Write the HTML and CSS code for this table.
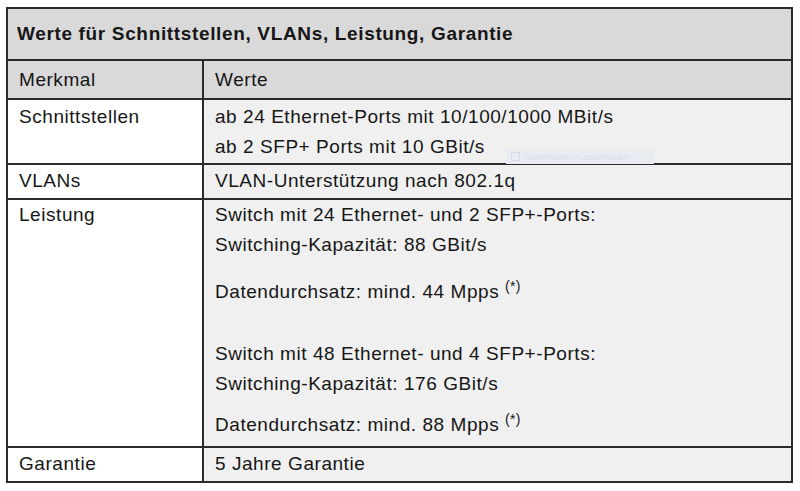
FILE: index.html
```html
<!DOCTYPE html>
<html lang="de">
<head>
<meta charset="utf-8">
<title>Werte für Schnittstellen, VLANs, Leistung, Garantie</title>
<link rel="stylesheet" href="styles.css">
</head>
<body>
<div class="page">
  <table class="spec">
    <colgroup><col class="c1"><col class="c2"></colgroup>
    <tr class="title"><th colspan="2">Werte für Schnittstellen, VLANs, Leistung, Garantie</th></tr>
    <tr class="head"><td>Merkmal</td><td>Werte</td></tr>
    <tr class="row r-if">
      <td>Schnittstellen</td>
      <td class="val has-mark">ab 24 Ethernet-Ports mit 10/100/1000 MBit/s<br>ab 2 SFP+ Ports mit 10 GBit/s
        <span class="mark"><span class="mark-ico"></span><span class="mark-txt">Seitenlegen-Ausschneiden</span></span>
      </td>
    </tr>
    <tr class="row r-vlan"><td>VLANs</td><td class="val">VLAN-Unterstützung nach 802.1q</td></tr>
    <tr class="row r-perf">
      <td>Leistung</td>
      <td class="val">
        <p class="p1">Switch mit 24 Ethernet- und 2 SFP+-Ports:<br>Switching-Kapazität: 88 GBit/s</p>
        <p class="p2">Datendurchsatz: mind. 44 Mpps <sup>(*)</sup></p>
        <p class="p3">Switch mit 48 Ethernet- und 4 SFP+-Ports:<br>Switching-Kapazität: 176 GBit/s</p>
        <p class="p4">Datendurchsatz: mind. 88 Mpps <sup>(*)</sup></p>
      </td>
    </tr>
    <tr class="row r-gar"><td>Garantie</td><td class="val">5 Jahre Garantie</td></tr>
  </table>
</div>
</body>
</html>
```
FILE: styles.css
```css
html, body {
  margin: 0;
  padding: 0;
  background: #ffffff;
}
.page {
  padding: 7px 0 0 6px;
  font-family: "Liberation Sans", Arial, sans-serif;
  color: #161616;
}
.spec {
  border-collapse: collapse;
  width: 787px;
  border: 2px solid #2b2b2b;
  font-size: 19px;
  line-height: 30px;
  letter-spacing: 0.55px;
}
.c1 { width: 196px; }
.spec th, .spec td {
  border: 2px solid #2b2b2b;
  text-align: left;
  vertical-align: top;
}
.title th {
  background: #d9d9d9;
  font-weight: bold;
  letter-spacing: 0.65px;
  height: 52px;
  padding: 0 9px;
  vertical-align: middle;
  box-sizing: border-box;
}
.head td {
  background: #d9d9d9;
  height: 39px;
  padding: 0 11px;
  vertical-align: middle;
  box-sizing: border-box;
}
.row td {
  background: #ffffff;
  padding: 2px 11px 1px;
}
.row td.val {
  background: #f0f0f0;
}
.has-mark { position: relative; }
.mark {
  position: absolute;
  left: 302px;
  top: 49px;
  width: 148px;
  height: 15px;
  background: #e9edf1;
  display: flex;
  align-items: center;
  gap: 4px;
  padding-left: 5px;
  box-sizing: border-box;
  letter-spacing: 0;
}
.mark-ico {
  width: 7px;
  height: 7px;
  border: 1px solid #d6dde5;
}
.mark-txt {
  font-size: 9px;
  line-height: 10px;
  color: #d8dfe7;
}
.r-vlan td { padding-top: 1px; padding-bottom: 2px; }
.r-perf td { padding-top: 0; padding-bottom: 6px; }
.r-gar td { padding-top: 1px; padding-bottom: 2px; }
.val p { margin: 0; }
.val .p2 { margin-top: 17px; }
.val .p3 { margin-top: 32px; }
.val .p4 { margin-top: 11px; }
sup {
  font-size: 14px;
  line-height: 0;
  letter-spacing: 0.3px;
  vertical-align: 7px;
}
```
